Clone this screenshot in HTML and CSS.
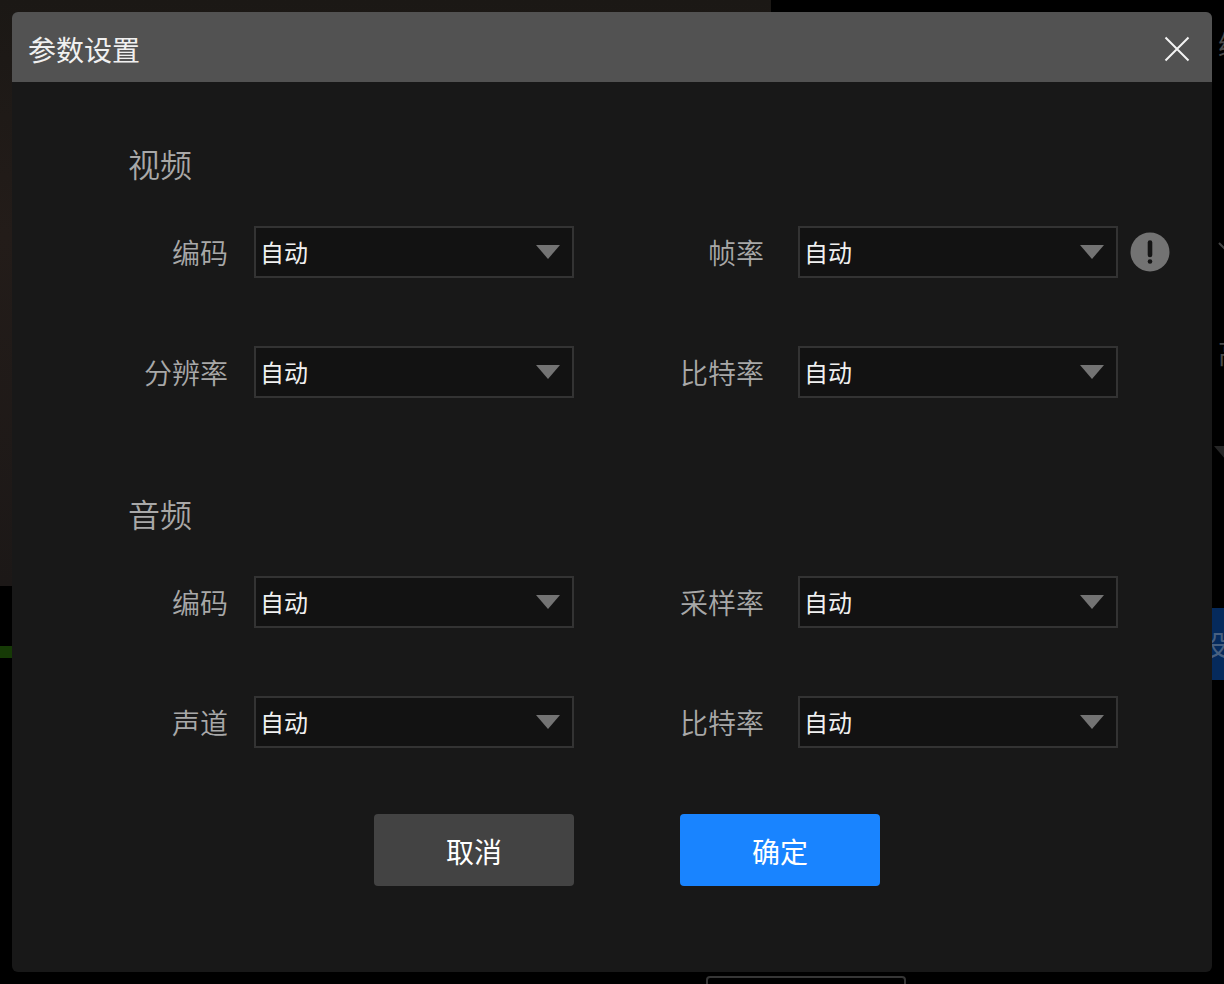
FILE: index.html
```html
<!DOCTYPE html>
<html lang="zh-CN">
<head>
<meta charset="utf-8">
<title>参数设置</title>
<link rel="stylesheet" href="styles.css">
</head>
<body class="page">
  <div class="backdrop" aria-hidden="true">
    <div class="backdrop-video"></div>
    <div class="backdrop-progress"></div>
    <div class="backdrop-box"></div>
    <span class="backdrop-text backdrop-text-edit">编</span>
    <svg class="backdrop-chevron backdrop-chevron-top" width="24" height="14" viewBox="0 0 24 14"><path d="M1 1l11 11L23 1" fill="none" stroke="#444" stroke-width="2"/></svg>
    <span class="backdrop-text backdrop-text-high">高</span>
    <svg class="backdrop-chevron backdrop-chevron-low" width="24" height="14" viewBox="0 0 24 14"><path d="M0 0h24L12 14z" fill="#262626"/></svg>
    <div class="backdrop-action">设</div>
  </div>

  <main class="dialog" role="dialog" aria-labelledby="dialog-title">
    <header class="dialog-header">
      <h1 class="dialog-title" id="dialog-title">参数设置</h1>
      <button class="close" type="button" aria-label="关闭">
        <svg width="26" height="26" viewBox="0 0 26 26"><path d="M1.500 1.500l23 23M24.500 1.500l-23 23" fill="none" stroke="#f4f4f4" stroke-width="2"/></svg>
      </button>
    </header>

    <form class="form">
      <section class="group">
        <h2 class="group-title">视频</h2>
        <div class="fields">
          <label class="label" for="video-codec">编码</label>
          <div class="select-wrap">
            <select class="select" id="video-codec"><option>自动</option></select>
            <svg class="caret" width="24" height="14" viewBox="0 0 24 14"><path d="M0 0h24L12 14z"/></svg>
          </div>
          <label class="label label-second" for="frame-rate">帧率</label>
          <div class="select-wrap">
            <select class="select" id="frame-rate"><option>自动</option></select>
            <svg class="caret" width="24" height="14" viewBox="0 0 24 14"><path d="M0 0h24L12 14z"/></svg>
          </div>
          <button class="info" type="button" aria-label="提示">
            <svg width="40" height="40" viewBox="0 0 40 40"><circle cx="20" cy="20" r="19.500" fill="#737373"/><path d="M20 10.500v12.500" stroke="#141414" stroke-width="4.600" stroke-linecap="round"/><circle cx="20" cy="29.500" r="2.300" fill="#141414"/></svg>
          </button>

          <label class="label" for="resolution">分辨率</label>
          <div class="select-wrap">
            <select class="select" id="resolution"><option>自动</option></select>
            <svg class="caret" width="24" height="14" viewBox="0 0 24 14"><path d="M0 0h24L12 14z"/></svg>
          </div>
          <label class="label label-second" for="video-bitrate">比特率</label>
          <div class="select-wrap">
            <select class="select" id="video-bitrate"><option>自动</option></select>
            <svg class="caret" width="24" height="14" viewBox="0 0 24 14"><path d="M0 0h24L12 14z"/></svg>
          </div>
        </div>
      </section>

      <section class="group">
        <h2 class="group-title">音频</h2>
        <div class="fields">
          <label class="label" for="audio-codec">编码</label>
          <div class="select-wrap">
            <select class="select" id="audio-codec"><option>自动</option></select>
            <svg class="caret" width="24" height="14" viewBox="0 0 24 14"><path d="M0 0h24L12 14z"/></svg>
          </div>
          <label class="label label-second" for="sample-rate">采样率</label>
          <div class="select-wrap">
            <select class="select" id="sample-rate"><option>自动</option></select>
            <svg class="caret" width="24" height="14" viewBox="0 0 24 14"><path d="M0 0h24L12 14z"/></svg>
          </div>

          <label class="label" for="channels">声道</label>
          <div class="select-wrap">
            <select class="select" id="channels"><option>自动</option></select>
            <svg class="caret" width="24" height="14" viewBox="0 0 24 14"><path d="M0 0h24L12 14z"/></svg>
          </div>
          <label class="label label-second" for="audio-bitrate">比特率</label>
          <div class="select-wrap">
            <select class="select" id="audio-bitrate"><option>自动</option></select>
            <svg class="caret" width="24" height="14" viewBox="0 0 24 14"><path d="M0 0h24L12 14z"/></svg>
          </div>
        </div>
      </section>

      <div class="actions">
        <button class="button button-cancel" type="button">取消</button>
        <button class="button button-confirm" type="submit">确定</button>
      </div>
    </form>
  </main>
</body>
</html>
```

FILE: styles.css
```css
* {
  box-sizing: border-box;
}

.page {
  position: relative;
  display: flex;
  min-height: 100vh;
  margin: 0;
  padding: 12px;
  background: #000;
  color: #a8a8a8;
  font-family: "Noto Sans CJK SC", sans-serif;
  font-size: 28px;
}

/* Dimmed application behind the dialog */
.backdrop {
  position: absolute;
  inset: 0;
  overflow: hidden;
  color: #4a4a4a;
}

.backdrop-video {
  position: absolute;
  top: 0;
  left: 0;
  width: 63%;
  height: 586px;
  background: linear-gradient(#1b1815, #231c19 40%, #1c1817);
}

.backdrop-progress {
  position: absolute;
  top: 646px;
  left: 0;
  width: 12px;
  height: 12px;
  background: #163a06;
}

.backdrop-box {
  position: absolute;
  top: 976px;
  left: 706px;
  width: 200px;
  height: 40px;
  border: 2px solid #363636;
  border-radius: 4px;
}

.backdrop-text {
  position: absolute;
  right: -22px;
  font-size: 28px;
  line-height: 40px;
}

.backdrop-text-edit {
  top: 24px;
}

.backdrop-text-high {
  top: 332px;
}

.backdrop-chevron {
  position: absolute;
  right: -18px;
}

.backdrop-chevron-top {
  top: 242px;
}

.backdrop-chevron-low {
  top: 446px;
  right: -14px;
}

.backdrop-action {
  position: absolute;
  top: 608px;
  right: -4px;
  width: 28px;
  height: 72px;
  background: #052a5c;
  color: #486080;
  line-height: 72px;
}

.dialog {
  position: relative;
  flex: 1;
  overflow: hidden;
  border-radius: 6px;
  background: #181818;
}

.dialog-header {
  display: flex;
  align-items: center;
  justify-content: space-between;
  height: 70px;
  padding: 4px 15px 0 16px;
  background: #525252;
}

.dialog-title {
  margin: 0;
  color: #f0f0f0;
  font-size: 28px;
  font-weight: 400;
  line-height: 40px;
}

.close,
.info {
  display: flex;
  align-items: center;
  justify-content: center;
  width: 40px;
  height: 40px;
  padding: 0;
  border: 0;
  background: none;
}

.form {
  padding: 57px 42px 84px 116px;
}

.group {
  margin-bottom: 91px;
}

.group:nth-of-type(2) {
  margin-bottom: 66px;
}

.group-title {
  margin: 0 0 39px;
  font-size: 32px;
  font-weight: 350;
  line-height: 48px;
}

.fields,
.actions {
  display: grid;
  grid-template-columns: 126px 1fr 224px 1fr 52px;
  align-items: center;
}

.fields {
  row-gap: 68px;
}

.label {
  grid-column: 1;
  padding-right: 26px;
  font-weight: 350;
  line-height: 40px;
  text-align: right;
}

.label-second {
  grid-column: 3;
  padding-right: 34px;
}

.select-wrap {
  position: relative;
}

.select {
  display: block;
  width: 100%;
  height: 52px;
  padding: 0 40px 2px 4px;
  border: 2px solid #333;
  border-radius: 0;
  appearance: none;
  background: #121212;
  color: #f0f0f0;
  font: inherit;
  font-size: 24px;
}

.caret {
  position: absolute;
  top: 19px;
  right: 14px;
  fill: #737373;
  pointer-events: none;
}

.info {
  justify-self: end;
}

.button {
  width: 200px;
  height: 72px;
  padding: 2px 0 0;
  border: 0;
  border-radius: 4px;
  color: #fff;
  font: inherit;
}

.button-cancel {
  grid-column: 2;
  justify-self: end;
  background: #434343;
}

.button-confirm {
  grid-column: 3 / span 2;
  margin-left: 106px;
  background: #1984ff;
}
```
